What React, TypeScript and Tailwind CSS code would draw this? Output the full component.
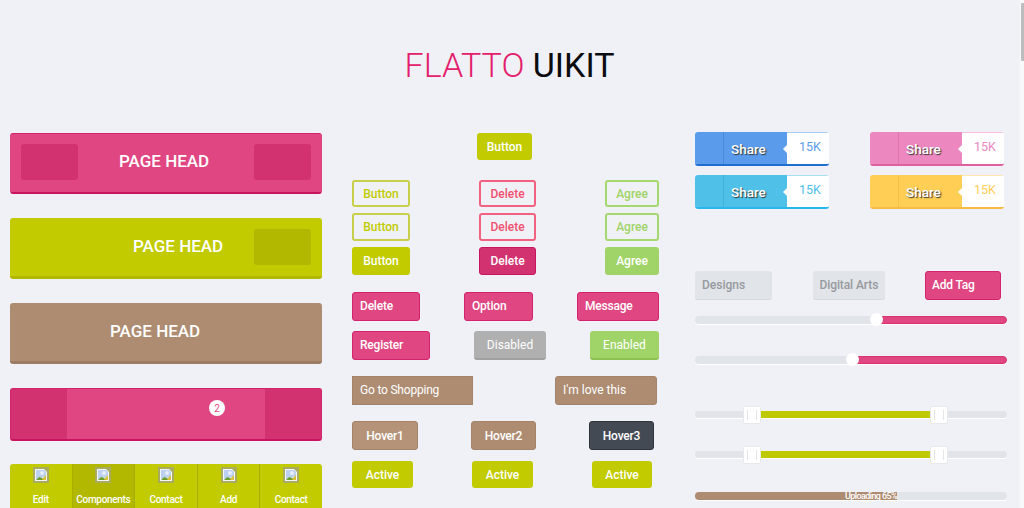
import React from "react";

const Broken = () => (
  <svg width="16" height="16" viewBox="0 0 16 16" className="block">
    <rect x="0" y="0" width="16" height="16" fill="#a9ac5f" />
    <path d="M2 2h9l3 3v9H2z" fill="#f4f6fb" />
    <path d="M3 3h8l2 2v4l-2 1-3 1-5 1z" fill="#bcd0f2" />
    <path d="M3 13l3-3 3 1 2 2z" fill="#6d9f2e" />
    <path d="M9 12l4-4v5h-3z" fill="#d9c23a" />
    <circle cx="9" cy="6" r="2" fill="#e8eefb" />
  </svg>
);

const Head = ({ className, children }: { className: string; children: React.ReactNode }) => (
  <div className={`flex items-center h-[61px] w-[312px] rounded-[3px] text-white text-[17px] font-medium ${className}`}>{children}</div>
);

const Btn = ({ className, children }: { className: string; children: React.ReactNode }) => (
  <div className={`flex items-center rounded-[3px] text-[12px] font-medium ${className}`}>{children}</div>
);

const Share = ({ bg, edge, divider, top, text }: { bg: string; edge: string; divider: string; top: string; text: string }) => (
  <div className={`flex w-[134px] h-[34px] rounded-[3px] overflow-hidden border-b-2 ${edge}`}>
    <div className={`w-[29px] border-r ${bg} ${divider}`} />
    <div className={`relative w-[63px] flex items-center pl-[7px] pt-[2px] text-white text-[13.5px] font-medium [text-shadow:1px_1px_1px_#333] ${bg}`}>
      Share
      <div className="absolute right-0 top-[13px] w-0 h-0 border-y-[4px] border-y-transparent border-r-[4px] border-r-white" />
    </div>
    <div className={`flex-1 bg-white border-t ${top} flex items-center pl-[12px] pb-[2px] text-[12.5px] ${text}`}>15K</div>
  </div>
);

const Track = ({ left, thumb }: { left: number; thumb: string }) => (
  <div className="relative flex h-[8px] rounded-full shadow-[0_1px_0_#fff]">
    <div className="bg-[#e1e4e8] rounded-l-full" style={{ width: left }} />
    <div className="flex-1 bg-[#e04682] border border-[#d8336f] rounded-r-full" />
    <div className={`absolute top-[-3px] w-[13px] h-[13px] rounded-full bg-white ${thumb}`} />
  </div>
);

const Handle = ({ className }: { className: string }) => (
  <div className={`absolute top-[-5px] w-[18px] h-[18px] rounded-[2px] bg-white border border-[#e8e9ec] flex justify-center gap-[8px] pt-[3px] ${className}`}>
    <div className="w-px h-[10px] bg-[#e3e5e8]" />
    <div className="w-px h-[10px] bg-[#e3e5e8]" />
  </div>
);

const Range = () => (
  <div className="relative flex h-[7px] rounded-full bg-[#e1e4e8] shadow-[0_1px_0_#fff]">
    <div className="ml-[57px] w-[187px] bg-[#bfc900]" />
    <Handle className="left-[48px]" />
    <Handle className="left-[235px]" />
  </div>
);

export default function App() {
  const pink = "bg-[#e04682] border border-[#d3236d] text-white pb-[2px] tracking-[-0.2px]";
  const outlineLime = "border-2 border-[#c8cf4a] text-[#c1cb00] justify-center";
  const outlineRed = "border-2 border-[#f2617f] text-[#f2506f] justify-center";
  const outlineGreen = "border-2 border-[#a5d86f] text-[#a0d468] justify-center";
  const brown = "bg-[#ad8c72] border border-[#a58369] text-white";
  return (
    <div className="flex h-screen overflow-hidden bg-[#f9f9f9] [font-family:Roboto,sans-serif]">
      <div className="w-[1019px] shrink-0 bg-[#f0f1f6]">
        <div className="h-[132px] pt-[40px] text-center text-[34px] leading-[50px] font-light text-[#e4206c]">
          FLATTO <span className="font-normal text-[#0c0c10]">UIKIT</span>
        </div>
        <div className="flex pl-[10px]">
          {/* column 1 */}
          <div className="w-[312px] pt-px flex flex-col gap-[24px]">
            <Head className="bg-[#e04682] border border-[#e04682] border-t-[#d3236d] border-b-2 border-b-[#c9145f] px-[10px] pb-[3px]">
              <div className="w-[57px] h-[36px] rounded-[3px] bg-[#d33271]" />
              <span className="ml-[41px]">PAGE HEAD</span>
              <div className="ml-auto w-[57px] h-[36px] rounded-[3px] bg-[#d33271]" />
            </Head>
            <Head className="bg-[#c1cb00] border-b-[3px] border-b-[#b2b800] pr-[11px]">
              <span className="ml-[123px] pb-px">PAGE HEAD</span>
              <div className="ml-auto w-[57px] h-[36px] rounded-[3px] bg-[#b2b800]" />
            </Head>
            <Head className="bg-[#ad8c72] border-b-[3px] border-b-[#9c7c64]">
              <span className="ml-[100px] pb-px">PAGE HEAD</span>
            </Head>
            <div className="flex h-[53px] w-[312px] rounded-[3px] bg-[#e04682] border border-[#d3236d] border-b-2 border-b-[#c9145f]">
              <div className="w-[56px] bg-[#d33271]" />
              <div className="w-[198px] h-[48px] flex items-start">
                <div className="ml-[142px] mt-[11px] w-[16px] h-[16px] rounded-full bg-white text-[#e04682] text-[10px] flex items-center justify-center">2</div>
              </div>
              <div className="flex-1 bg-[#d33271]" />
            </div>
            <div className="flex -mt-px h-[60px] w-[312px] rounded-t-[3px] bg-[#c1cb00] overflow-hidden text-white text-[10px] font-medium tracking-[-0.3px]">
              {["Edit", "Components", "Contact", "Add", "Contact"].map((t, i) => (
                <div key={i} className={`flex-1 flex flex-col items-center pt-[3px] ${i < 4 ? "border-r border-[#a9ae00]" : ""} ${i === 1 ? "bg-[#b2b800]" : ""}`}>
                  <Broken />
                  <span className="mt-[11px] leading-[12px] whitespace-nowrap">{t}</span>
                </div>
              ))}
            </div>
          </div>
          {/* column 2 */}
          <div className="ml-[30px] w-[307px] pt-px flex flex-col">
            <Btn className="ml-[125px] w-[55px] h-[27px] justify-center bg-[#c1cb00] text-white">Button</Btn>
            <div className="mt-[20px] flex justify-between">
              <Btn className={`w-[58px] h-[27px] ${outlineLime}`}>Button</Btn>
              <Btn className={`w-[57px] h-[27px] ${outlineRed}`}>Delete</Btn>
              <Btn className={`w-[54px] h-[27px] ${outlineGreen}`}>Agree</Btn>
            </div>
            <div className="mt-[6px] flex justify-between">
              <Btn className={`w-[58px] h-[28px] ${outlineLime}`}>Button</Btn>
              <Btn className={`w-[57px] h-[28px] ${outlineRed}`}>Delete</Btn>
              <Btn className={`w-[54px] h-[28px] ${outlineGreen}`}>Agree</Btn>
            </div>
            <div className="mt-[6px] flex justify-between">
              <Btn className="w-[58px] h-[28px] justify-center bg-[#c1cb00] text-white">Button</Btn>
              <Btn className="w-[57px] h-[28px] justify-center bg-[#d33271] border border-[#c9145f] text-white">Delete</Btn>
              <Btn className="w-[54px] h-[28px] justify-center bg-[#a0d468] text-white">Agree</Btn>
            </div>
            <div className="mt-[17px] flex justify-between">
              <Btn className={`w-[68px] h-[29px] pl-[7px] ${pink}`}>Delete</Btn>
              <Btn className={`w-[69px] h-[29px] pl-[7px] ${pink}`}>Option</Btn>
              <Btn className={`w-[82px] h-[29px] pl-[7px] ${pink}`}>Message</Btn>
            </div>
            <div className="mt-[10px] flex justify-between">
              <Btn className={`w-[78px] h-[29px] pl-[7px] ${pink}`}>Register</Btn>
              <Btn className="w-[72px] h-[29px] justify-center bg-[#b0b0b0] border-b-2 border-b-[#a0a0a0] text-white font-normal">Disabled</Btn>
              <Btn className="w-[69px] h-[29px] justify-center bg-[#a0d468] border-b-2 border-b-[#8cc152] text-white font-normal">Enabled</Btn>
            </div>
            <div className="mt-[16px] w-[305px] flex justify-between">
              <Btn className={`w-[121px] h-[29px] pl-[7px] pb-[2px] !rounded-none font-normal tracking-[-0.2px] ${brown}`}>Go to Shopping</Btn>
              <Btn className={`w-[102px] h-[29px] pl-[7px] pb-[2px] font-normal ${brown}`}>I'm love this</Btn>
            </div>
            <div className="mt-[16px] w-[302px] flex justify-between">
              <Btn className="w-[66px] h-[29px] justify-center bg-[#b59379] border border-[#a58369] text-white tracking-[-0.2px]">Hover1</Btn>
              <Btn className={`w-[65px] h-[29px] justify-center tracking-[-0.2px] ${brown}`}>Hover2</Btn>
              <Btn className="w-[65px] h-[29px] justify-center bg-[#434a54] border border-[#2f353d] text-white tracking-[-0.2px]">Hover3</Btn>
            </div>
            <div className="mt-[11px] w-[300px] flex justify-between">
              <Btn className="w-[61px] h-[27px] justify-center bg-[#c1cb00] text-white">Active</Btn>
              <Btn className="w-[61px] h-[27px] justify-center bg-[#c1cb00] text-white">Active</Btn>
              <Btn className="w-[60px] h-[27px] justify-center bg-[#c1cb00] text-white">Active</Btn>
            </div>
          </div>
          {/* column 3 */}
          <div className="ml-[36px] w-[312px] flex flex-col">
            <div className="flex justify-between w-[309px]">
              <Share bg="bg-[#5a9bec]" edge="border-b-[#1f6fd0]" divider="border-r-[#4a88d8]" top="border-t-[#a6cdf5]" text="text-[#5d9cec]" />
              <Share bg="bg-[#ec87c0]" edge="border-b-[#e0609f]" divider="border-r-[#dd74ae]" top="border-t-[#f5bedd]" text="text-[#ec87c0]" />
            </div>
            <div className="mt-[9px] flex justify-between w-[309px]">
              <Share bg="bg-[#4fc1e9]" edge="border-b-[#29b6ea]" divider="border-r-[#3db3dc]" top="border-t-[#a8dff3]" text="text-[#4fc1e9]" />
              <Share bg="bg-[#ffce54]" edge="border-b-[#f6bb42]" divider="border-r-[#f4c24c]" top="border-t-[#ffe6aa]" text="text-[#ffce54]" />
            </div>
            <div className="mt-[62px] flex justify-between w-[306px]">
              <Btn className="w-[77px] h-[29px] pl-[7px] bg-[#e1e4e8] border-b border-b-[#d5d8dc] text-[#96999e]">Designs</Btn>
              <Btn className="w-[72px] h-[29px] pl-[7px] bg-[#e1e4e8] border-b border-b-[#d5d8dc] text-[#96999e] tracking-[-0.1px]">Digital Arts</Btn>
              <Btn className={`w-[76px] h-[29px] pl-[6px] ${pink}`}>Add Tag</Btn>
            </div>
            <div className="mt-[16px]"><Track left={181} thumb="left-[175px]" /></div>
            <div className="mt-[32px]"><Track left={157} thumb="left-[151px]" /></div>
            <div className="mt-[47px]"><Range /></div>
            <div className="mt-[33px]"><Range /></div>
            <div className="mt-[34px] h-[8px] rounded-full bg-[#e1e4e8] shadow-[0_1px_0_#fff]">
              <div className="w-[202px] h-[8px] rounded-l-full bg-[#ad8c72] text-white text-[9px] font-medium tracking-[-0.6px] leading-[9px] text-right whitespace-nowrap">Uploading 65%</div>
            </div>
          </div>
        </div>
      </div>
      <div className="flex-1 border-l border-[#f3f3f3] flex justify-end pt-[3px]">
        <div className="w-[3px] h-[58px] bg-[#bdbdbd] rounded-l-[1px]" />
      </div>
    </div>
  );
}
